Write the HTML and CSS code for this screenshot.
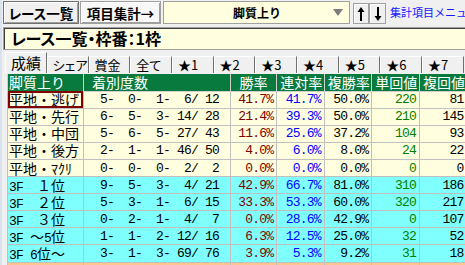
FILE: index.html
```html
<!DOCTYPE html>
<html lang="ja">
<head>
  <meta charset="UTF-8">
  <title>脚質上り</title>
  <link rel="stylesheet" href="styles.css">
</head>
<body>
  <div class="app">
    <div class="toolbar">
      <button class="tool-btn tool-btn--list">レース一覧</button>
      <button class="tool-btn tool-btn--sum">項目集計→</button>
      <div class="combo">
        <span class="combo__text">脚質上り</span>
        <span class="combo__arrow"></span>
      </div>
      <button class="arrow-btn"><svg width="8" height="14" viewBox="0 0 8 14"><path d="M4 0 L7.5 5 H5 V14 H3 V5 H0.5 Z" fill="#000"/></svg></button>
      <button class="arrow-btn"><svg width="8" height="14" viewBox="0 0 8 14"><path d="M4 14 L7.5 9 H5 V0 H3 V9 H0.5 Z" fill="#000"/></svg></button>
      <span class="menu-link">集計項目メニュー</span>
    </div>

    <div class="title-box">レース一覧・枠番：1枠</div>

    <div class="tabs">
      <div class="tab tab--active">成績</div>
      <div class="tab">シェア</div>
      <div class="tab">賞金</div>
      <div class="tab">全て</div>
      <div class="tab">★1</div>
      <div class="tab">★2</div>
      <div class="tab">★3</div>
      <div class="tab">★4</div>
      <div class="tab">★5</div>
      <div class="tab">★6</div>
      <div class="tab">★7</div>
    </div>

    <table class="grid">
      <colgroup>
        <col style="width:75px">
        <col style="width:145px">
        <col style="width:46px">
        <col style="width:47px">
        <col style="width:47px">
        <col style="width:47px">
        <col style="width:47px">
        <col style="width:40px">
      </colgroup>
      <thead>
        <tr>
          <th class="h-label">脚質上り</th>
          <th class="h-count">着別度数</th>
          <th>勝率</th>
          <th>連対率</th>
          <th>複勝率</th>
          <th>単回値</th>
          <th>複回値</th>
          <th></th>
        </tr>
      </thead>
      <tbody>
        <tr>
          <td class="label selected">平地・逃げ</td>
          <td class="num count">  5-  0-  1-  6/ 12</td>
          <td class="num win">41.7%</td>
          <td class="num ren">41.7%</td>
          <td class="num">50.0%</td>
          <td class="num tan">220</td>
          <td class="num">81</td>
          <td></td>
        </tr>
        <tr>
          <td class="label">平地・先行</td>
          <td class="num count">  6-  5-  3- 14/ 28</td>
          <td class="num win">21.4%</td>
          <td class="num ren">39.3%</td>
          <td class="num">50.0%</td>
          <td class="num tan">210</td>
          <td class="num">145</td>
          <td></td>
        </tr>
        <tr>
          <td class="label">平地・中団</td>
          <td class="num count">  5-  6-  5- 27/ 43</td>
          <td class="num win">11.6%</td>
          <td class="num ren">25.6%</td>
          <td class="num">37.2%</td>
          <td class="num tan">104</td>
          <td class="num">93</td>
          <td></td>
        </tr>
        <tr>
          <td class="label">平地・後方</td>
          <td class="num count">  2-  1-  1- 46/ 50</td>
          <td class="num win">4.0%</td>
          <td class="num ren">6.0%</td>
          <td class="num">8.0%</td>
          <td class="num tan">24</td>
          <td class="num">22</td>
          <td></td>
        </tr>
        <tr>
          <td class="label">平地・ﾏｸﾘ</td>
          <td class="num count">  0-  0-  0-  2/  2</td>
          <td class="num win">0.0%</td>
          <td class="num ren">0.0%</td>
          <td class="num">0.0%</td>
          <td class="num tan">0</td>
          <td class="num">0</td>
          <td></td>
        </tr>
        <tr class="cyan">
          <td class="label"><span class="mono">3F</span>　１位</td>
          <td class="num count">  9-  5-  3-  4/ 21</td>
          <td class="num win">42.9%</td>
          <td class="num ren">66.7%</td>
          <td class="num">81.0%</td>
          <td class="num tan">310</td>
          <td class="num">186</td>
          <td></td>
        </tr>
        <tr class="cyan">
          <td class="label"><span class="mono">3F</span>　２位</td>
          <td class="num count">  5-  3-  1-  6/ 15</td>
          <td class="num win">33.3%</td>
          <td class="num ren">53.3%</td>
          <td class="num">60.0%</td>
          <td class="num tan">320</td>
          <td class="num">217</td>
          <td></td>
        </tr>
        <tr class="cyan">
          <td class="label"><span class="mono">3F</span>　３位</td>
          <td class="num count">  0-  2-  1-  4/  7</td>
          <td class="num win">0.0%</td>
          <td class="num ren">28.6%</td>
          <td class="num">42.9%</td>
          <td class="num tan">0</td>
          <td class="num">107</td>
          <td></td>
        </tr>
        <tr class="cyan">
          <td class="label"><span class="mono">3F </span>～<span class="mono">5</span>位</td>
          <td class="num count">  1-  1-  2- 12/ 16</td>
          <td class="num win">6.3%</td>
          <td class="num ren">12.5%</td>
          <td class="num">25.0%</td>
          <td class="num tan">32</td>
          <td class="num">52</td>
          <td></td>
        </tr>
        <tr class="cyan">
          <td class="label"><span class="mono">3F 6</span>位～</td>
          <td class="num count">  3-  1-  3- 69/ 76</td>
          <td class="num win">3.9%</td>
          <td class="num ren">5.3%</td>
          <td class="num">9.2%</td>
          <td class="num tan">31</td>
          <td class="num">18</td>
          <td></td>
        </tr>
        <tr class="orange">
          <td></td><td></td><td></td><td></td><td></td><td></td><td></td><td></td>
        </tr>
      </tbody>
    </table>
  </div>
</body>
</html>
```

FILE: styles.css
```css
* {
  box-sizing: border-box;
}

html {
  font-family: "Noto Sans CJK JP", sans-serif;
}

body {
  margin: 0;
}

.app {
  width: 465px;
  height: 265px;
  overflow: hidden;
  background: #f0f0f0;
  border-left: 2px solid #d9e3ef;
}

/* top tool bar */
.toolbar {
  display: flex;
  align-items: flex-start;
  height: 26px;
  padding: 1px 0 0 1px;
  white-space: nowrap;
  overflow: hidden;
}

.toolbar > * {
  flex: none;
}

.tool-btn {
  height: 23px;
  padding: 0;
  font-family: inherit;
  font-size: 13.5px;
  font-weight: bold;
  font-feature-settings: "palt";
  line-height: 20px;
  color: #000;
  background: #f0f0f0;
  border: 1px solid #707070;
  box-shadow: inset 1px 1px #fff, inset -1px -1px #a0a0a0;
}

.tool-btn--list {
  width: 76px;
  margin-right: 1px;
}

.tool-btn--sum {
  width: 81px;
  margin-right: 2px;
  background: #f8f8f8;
  border-color: #a0a0a0;
}

.combo {
  display: flex;
  align-items: center;
  width: 187px;
  height: 23px;
  margin-right: 3px;
  padding-left: 17px;
  background: #ffffe0;
  border: 1px solid #a0a0a0;
}

.combo__text {
  flex: 1;
  text-align: center;
  font-size: 12px;
  font-weight: bold;
}

.combo__arrow {
  width: 0;
  height: 0;
  margin-right: 6px;
  border-left: 5px solid transparent;
  border-right: 5px solid transparent;
  border-top: 7px solid #7c7c7c;
}

.arrow-btn {
  display: flex;
  align-items: center;
  justify-content: center;
  width: 16px;
  height: 21px;
  margin-top: 2px;
  padding: 0;
  background: #f0f0f0;
  border: 1px solid #a0a0a0;
  box-shadow: inset 1px 1px #fff;
}

.arrow-btn + .arrow-btn {
  width: 17px;
  margin-right: 4px;
}

.menu-link {
  margin-top: 3px;
  font-size: 11px;
  line-height: 17px;
  color: #1515ff;
}

/* caption box */
.title-box {
  width: 480px;
  height: 23px;
  margin: 1px 0 0 1px;
  padding-left: 7px;
  background: #ffffe0;
  border: 1px solid #a0a0a0;
  box-shadow: inset 1px 1px #404040;
  font-size: 16px;
  font-weight: bold;
  font-feature-settings: "palt";
  line-height: 21px;
  white-space: nowrap;
}

/* tabs */
.tabs {
  display: flex;
  align-items: flex-end;
  height: 21px;
  margin-top: 2px;
  padding-left: 3px;
}

.tab {
  flex: 0 0 41.7px;
  height: 17px;
  padding-left: 5px;
  border-top: 1px solid #fff;
  border-left: 1px solid #fff;
  border-right: 1px solid #707070;
  font-size: 13px;
  font-feature-settings: "palt";
  line-height: 16px;
  white-space: nowrap;
}

.tab--active {
  height: 21px;
  font-size: 15px;
  line-height: 19px;
}

/* data grid */
.grid {
  margin: 1px 0 0 5px;
  border-collapse: collapse;
  table-layout: fixed;
  width: 501px;
}

.grid th,
.grid td {
  height: 17.1px;
  padding: 0 3px;
  line-height: 15px;
  white-space: pre;
  vertical-align: middle;
}

.grid th {
  background: #087a3e;
  color: #fff;
  font-size: 14px;
  font-weight: normal;
  text-align: center;
  border: 1px solid #d0d0d0;
  border-top: 0;
}

.grid th.h-label {
  text-align: left;
  padding-left: 1px;
}

.grid th.h-count {
  text-align: left;
  padding-left: 8px;
}

.grid td {
  background: #ffffe0;
  border: 1px solid #c0c0c0;
  font-size: 14px;
}

.grid .cyan td {
  background: #80ffff;
}

.grid .orange td {
  background: #ffc590;
}

.grid td.label {
  padding-left: 1px;
}

.grid td.selected {
  outline: 2px solid #800000;
  outline-offset: -2px;
}

.grid td.num,
.grid .mono {
  font-family: "Liberation Mono", monospace;
  font-size: 13px;
  letter-spacing: -0.8px;
}

.grid .mono {
  line-height: 0;
}

.grid td.num {
  text-align: right;
}

.grid td.count {
  text-align: left;
  padding-left: 2px;
}

.win {
  color: #800000;
}

.ren {
  color: #0000ff;
}

.tan {
  color: #008000;
}
```
